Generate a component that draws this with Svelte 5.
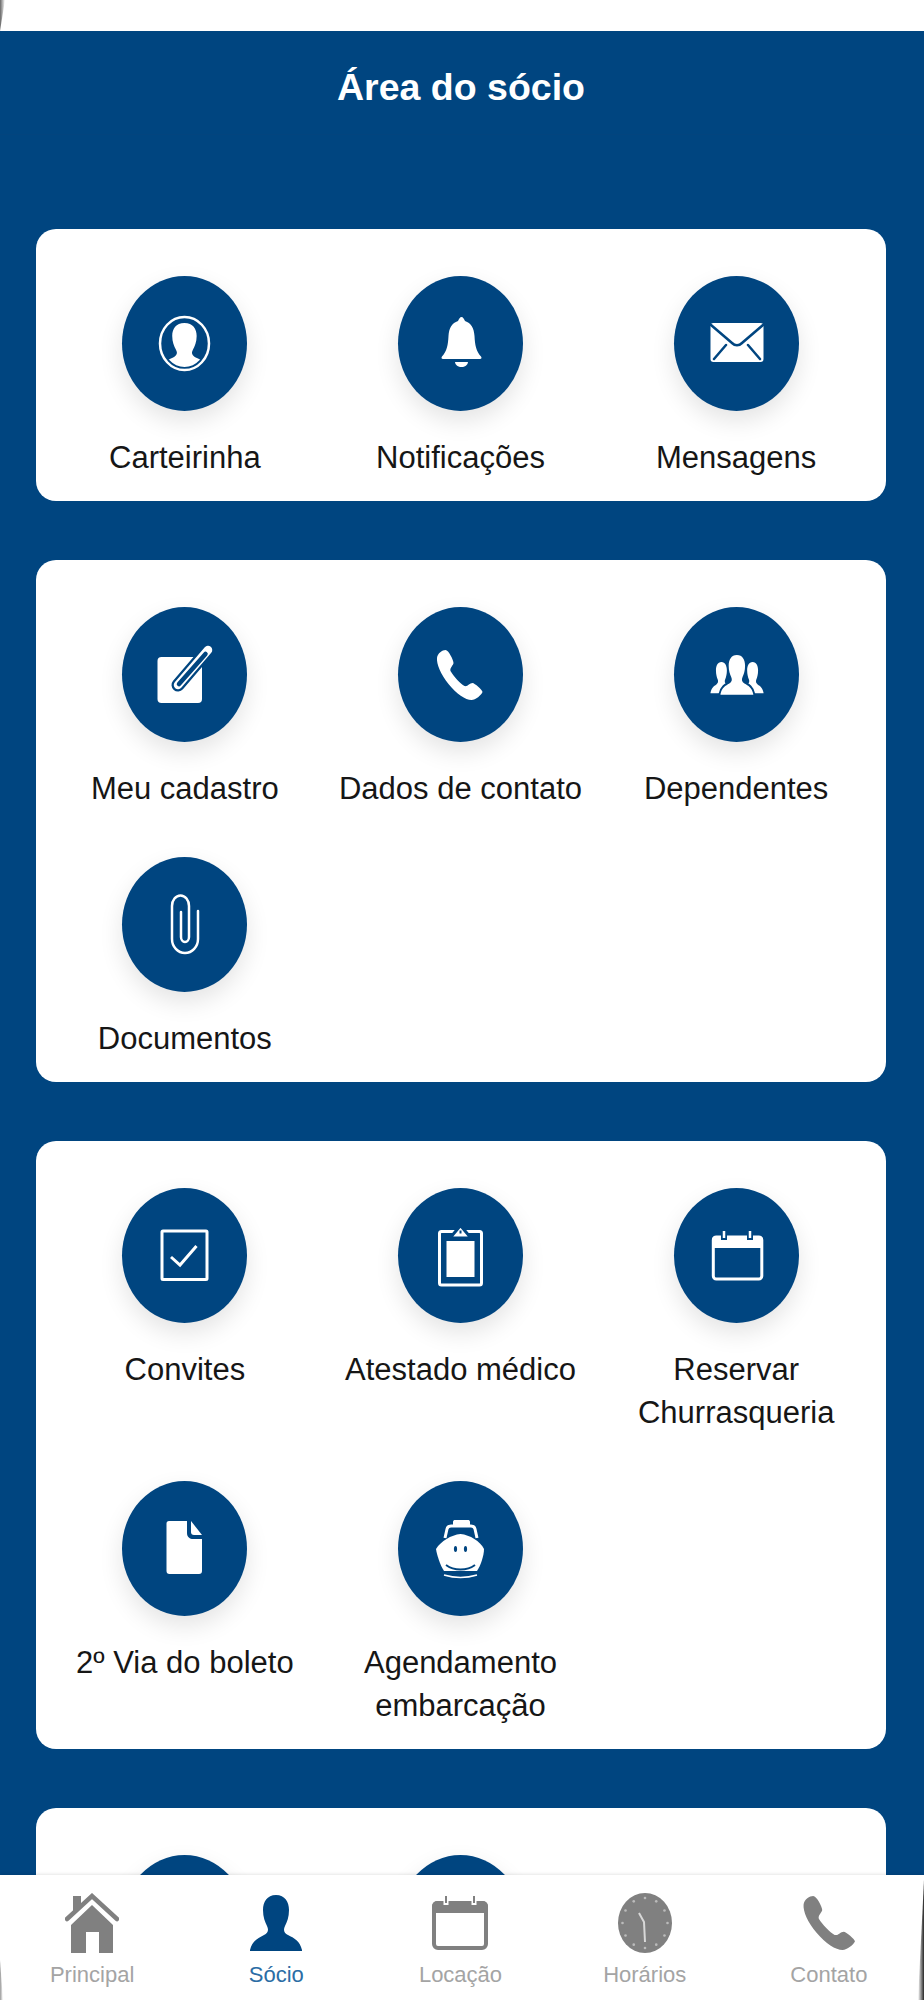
<script>
  const person = "M26 0C35 0 39 7 39 15C39 22 37 27 35 31C33 35 34 38 38 40C44 43 50 46 52 55L52 56H0L0 55C2 46 8 43 14 40C18 38 19 35 17 31C15 27 13 22 13 15C13 7 17 0 26 0Z";
  const phone = "M9 0C6 0 1 3 .5 8C0 14 4 24 12 34C20 44 29 50 35 50C39 50 45 45 46 42C46 40 38 33 36 33C33 33 31 37 28 36C24 34 17 26 14 21C13 18 17 15 17 13C17 10 12 0 9 0Z";

  const cards = [
    [
      { icon: 'card', label: 'Carteirinha' },
      { icon: 'bell', label: 'Notificações' },
      { icon: 'mail', label: 'Mensagens' }
    ],
    [
      { icon: 'edit', label: 'Meu cadastro' },
      { icon: 'phone', label: 'Dados de contato' },
      { icon: 'people', label: 'Dependentes' },
      { icon: 'clip', label: 'Documentos' }
    ],
    [
      { icon: 'check', label: 'Convites' },
      { icon: 'clipboard', label: 'Atestado médico' },
      { icon: 'calendar', label: 'Reservar Churrasqueria' },
      { icon: 'doc', label: '2º Via do boleto' },
      { icon: 'boat', label: 'Agendamento embarcação' }
    ],
    [
      { icon: 'none', label: '' },
      { icon: 'none', label: '' }
    ]
  ];

  const tabs = ['Principal', 'Sócio', 'Locação', 'Horários', 'Contato'];
  const ticks = Array.from({ length: 12 }, (_, i) => {
    const a = (i * Math.PI) / 6;
    return { x: 27 + Math.sin(a) * 22.5, y: 30 - Math.cos(a) * 25 };
  });
</script>

{#snippet glyph(name)}
  <svg class="glyph" viewBox="0 0 125 135" aria-hidden="true">
    {#if name === 'card'}
      <clipPath id="ringclip"><ellipse cx="62.5" cy="67.5" rx="21.5" ry="23.5" /></clipPath>
      <ellipse cx="62.5" cy="67.5" rx="24.5" ry="26.5" fill="none" stroke="#fff" stroke-width="2.5" />
      <g clip-path="url(#ringclip)">
        <path d={person} fill="#fff" transform="translate(38 47) scale(.94 .86)" />
        <rect x="38" y="93" width="50" height="10" fill="#fff" />
      </g>
    {:else if name === 'bell'}
      <path fill="#fff" d="M63.5 41C65 41 66 43 67 45C73 47 76 52 76.500 60C77 69 78 75 83 80.500C84 82 83.500 83 82 83H45C43.500 83 43 82 44 80.500C49 75 50 69 50.500 60C51 52 54 47 60 45C61 43 62 41 63.500 41Z" />
      <path fill="#fff" d="M57 86H70C69.500 89.500 67 91 63.500 91C60 91 57.500 89.500 57 86Z" />
    {:else if name === 'mail'}
      <rect x="36.500" y="47" width="53" height="39" rx="3" fill="#fff" />
      <path d="M37 49L58 67C61 70 65 70 68 67L89 49M40 83L52 69M86 83L74 69" fill="none" stroke="#004580" stroke-width="2.500" stroke-linecap="round" />
    {:else if name === 'edit'}
      <rect x="35.500" y="50" width="44.500" height="46" rx="4" fill="#fff" />
      <path d="M86 43L56 78" stroke="#004580" stroke-width="13" stroke-linecap="round" />
      <path d="M86 43L56 78" stroke="#fff" stroke-width="8.500" stroke-linecap="round" />
      <path d="M83.500 47L57 77" stroke="#004580" stroke-width="4.500" stroke-linecap="round" />
    {:else if name === 'phone'}
      <path d={phone} fill="#fff" transform="translate(38.500 43)" />
    {:else if name === 'people'}
      <path d={person} fill="#fff" transform="translate(36.500 55) scale(.42 .56)" />
      <path d={person} fill="#fff" transform="translate(67.700 55) scale(.42 .56)" />
      <path d={person} fill="#004580" stroke="#004580" stroke-width="6" transform="translate(46.500 48) scale(.63 .71)" />
      <path d={person} fill="#fff" transform="translate(46.500 48) scale(.63 .71)" />
    {:else if name === 'clip'}
      <path d="M76 54V82A13 14 0 0 1 50 82V49A8.500 10.500 0 0 1 67 49V80A4 5 0 0 1 59 80V55" fill="none" stroke="#fff" stroke-width="2.500" stroke-linecap="round" />
    {:else if name === 'check'}
      <rect x="40" y="43" width="45" height="48.500" fill="none" stroke="#fff" stroke-width="3" rx="1" />
      <path d="M49 69L58 77L74.500 58" fill="none" stroke="#fff" stroke-width="3" />
    {:else if name === 'clipboard'}
      <rect x="41.500" y="43.500" width="42" height="53.500" rx="2" fill="none" stroke="#fff" stroke-width="3" />
      <rect x="48.500" y="53" width="28" height="36" fill="#fff" />
      <path d="M52 50L62.500 37.500L73 50Z" fill="#fff" stroke="#004580" stroke-width="3" />
      <path d="M61.500 44H63.500" stroke="#004580" stroke-width="3" />
    {:else if name === 'calendar'}
      <path d="M38 52A4 4 0 0 1 42 48H85A4 4 0 0 1 89 52V60H38Z" fill="#fff" />
      <rect x="39.300" y="49" width="48.500" height="42" rx="3" fill="none" stroke="#fff" stroke-width="3" />
      <path d="M50 43V52M76 43V52" stroke="#004580" stroke-width="6" />
      <path d="M50 43V50M76 43V50" stroke="#fff" stroke-width="2.500" />
    {:else if name === 'doc'}
      <path d="M47 40H65V52C65 56 68 58 71 58H80V90A3 3 0 0 1 77 93H47.500A3 3 0 0 1 44.500 90V42.500A2.500 2.500 0 0 1 47 40Z" fill="#fff" />
      <path d="M69 40L80 54H72C70 54 69 53 69 51Z" fill="#fff" />
    {:else if name === 'boat'}
      <path d="M55 45V41C55 39.500 56 39 57 39H70C71 39 72 39.500 72 41V45Z" fill="#fff" />
      <path d="M47 57L49 48C49.500 46 51 45 53 45H73C75 45 76.500 46 77 48L79 57" fill="none" stroke="#fff" stroke-width="3" />
      <path d="M62.500 53C72 54 82 60 86 68C86 74 83 84 79 90H46C42 84 39 74 38 68C43 60 53 54 62.500 53Z" fill="#fff" />
      <ellipse cx="57.500" cy="68" rx="1.600" ry="3" fill="#004580" />
      <ellipse cx="67.500" cy="68" rx="1.600" ry="3" fill="#004580" />
      <path d="M48 84C56 90 69 90 77 84" fill="none" stroke="#004580" stroke-width="2" />
      <path d="M46 94C56 97 69 97 79 94" fill="none" stroke="#fff" stroke-width="1.500" />
    {/if}
  </svg>
{/snippet}

<div class="page">
  <div class="status"></div>
  <header class="top"><h1>Área do sócio</h1></header>

  <main>
    {#each cards as items}
      <section class="card">
        {#each items as item}
          <div class="item">
            <div class="disc">{@render glyph(item.icon)}</div>
            <div class="label">{item.label}</div>
          </div>
        {/each}
      </section>
    {/each}
  </main>

  <nav class="tabbar">
    {#each tabs as tab, i}
      <div class="tab" class:active={i === 1}>
        <div class="tabicon">
          {#if i === 0}
            <svg width="54" height="60" viewBox="0 0 54 60" aria-hidden="true">
              <path d="M8 3H16V13L8 21Z" fill="#808080" />
              <path d="M2 26L27 3L52 26" fill="none" stroke="#808080" stroke-width="4.500" stroke-linecap="round" />
              <path fill-rule="evenodd" fill="#808080" d="M27 12L48 32V60H34V39H21V60H6V32Z" />
            </svg>
          {:else if i === 1}
            <svg width="52" height="56" viewBox="0 0 52 56" aria-hidden="true"><path d={person} fill="#004580" /></svg>
          {:else if i === 2}
            <svg width="56" height="54" viewBox="0 0 56 54" aria-hidden="true">
              <path d="M0 10A5 5 0 0 1 5 5H51A5 5 0 0 1 56 10V17H0Z" fill="#808080" />
              <rect x="2" y="7" width="52" height="45" rx="4" fill="none" stroke="#808080" stroke-width="4" />
              <path d="M14 0V9M42 0V9" stroke="#fff" stroke-width="5" />
              <path d="M14 0V7M42 0V7" stroke="#808080" stroke-width="2" />
            </svg>
          {:else if i === 3}
            <svg width="54" height="60" viewBox="0 0 54 60" aria-hidden="true">
              <ellipse cx="27" cy="30" rx="27" ry="30" fill="#808080" />
              {#each ticks as t}
                <circle cx={t.x} cy={t.y} r="1.300" fill="#bbb" />
              {/each}
              <path d="M21 20L26 29L27 49" fill="none" stroke="#d8d8d8" stroke-width="2" />
            </svg>
          {:else}
            <svg width="52" height="54" viewBox="0 0 46 50" preserveAspectRatio="none" aria-hidden="true"><path d={phone} fill="#808080" /></svg>
          {/if}
        </div>
        <span>{tab}</span>
      </div>
    {/each}
  </nav>

  <div class="edge edge-tl"></div>
  <div class="edge edge-br"></div>
  <div class="edge edge-bl"></div>
</div>

<style>
  :global(body) {
    margin: 0;
    background: #fff;
  }

  .page {
    position: relative;
    width: 924px;
    height: 2000px;
    display: flex;
    flex-direction: column;
    overflow: hidden;
    background: #004580;
    font-family: "Liberation Sans", Arial, sans-serif;
  }

  .status {
    height: 31px;
    flex: none;
    background: #fff;
  }

  .top {
    flex: none;
    box-sizing: border-box;
    height: 104px;
    padding: 9px 2px 0 0;
    display: flex;
    align-items: center;
    justify-content: center;
    border-bottom: 1px solid #03447e;
  }

  h1 {
    margin: 0;
    color: #fff;
    font-size: 37.500px;
    font-weight: 700;
    line-height: 44px;
  }

  main {
    flex: 1;
    min-height: 0;
    overflow: hidden;
    box-sizing: border-box;
    padding: 94px 38px 0 36px;
    display: flex;
    flex-direction: column;
    gap: 59px;
  }

  .card {
    flex: none;
    display: grid;
    grid-template-columns: repeat(3, 1fr);
    row-gap: 47px;
    padding: 47px 12px 22px 11px;
    background: #fff;
    border-radius: 20px;
  }

  .item {
    display: flex;
    flex-direction: column;
    align-items: center;
  }

  .disc {
    width: 125px;
    height: 135px;
    flex: none;
    border-radius: 50%;
    background: #004580;
    box-shadow: 0 10px 24px rgba(0, 0, 0, 0.11);
  }

  .glyph {
    display: block;
    width: 125px;
    height: 135px;
  }

  .label {
    margin-top: 25px;
    color: #161616;
    font-size: 31px;
    line-height: 43px;
    min-height: 43px;
    text-align: center;
  }

  .tabbar {
    position: relative;
    flex: none;
    box-sizing: border-box;
    height: 125px;
    padding: 18px 3px 0 0;
    display: grid;
    grid-template-columns: repeat(5, 1fr);
    background: #fff;
    box-shadow: 0 -1px 3px rgba(0, 0, 0, 0.1);
  }

  .tab {
    display: flex;
    flex-direction: column;
    align-items: center;
    color: #a4a4a4;
    font-size: 22px;
    line-height: 24px;
  }

  .tab.active {
    color: #2b6da5;
  }

  .tabicon {
    height: 60px;
    margin-bottom: 10px;
    display: flex;
    align-items: center;
    justify-content: center;
  }

  .tabicon svg {
    display: block;
  }

  .edge {
    position: absolute;
    pointer-events: none;
  }

  .edge-tl {
    left: 0;
    top: 0;
    width: 5px;
    height: 31px;
    background: linear-gradient(to right, rgba(0, 0, 0, 0.6), rgba(0, 0, 0, 0));
    clip-path: polygon(0 0, 100% 0, 0 100%);
  }

  .edge-br {
    right: 0;
    bottom: 0;
    width: 6px;
    height: 120px;
    background: linear-gradient(to left, rgba(0, 0, 0, 0.85), rgba(0, 0, 0, 0));
    clip-path: polygon(100% 0, 100% 100%, 0 100%);
  }

  .edge-bl {
    left: 0;
    bottom: 0;
    width: 3px;
    height: 40px;
    background: linear-gradient(to right, rgba(0, 0, 0, 0.4), rgba(0, 0, 0, 0));
    clip-path: polygon(0 0, 100% 100%, 0 100%);
  }
</style>
